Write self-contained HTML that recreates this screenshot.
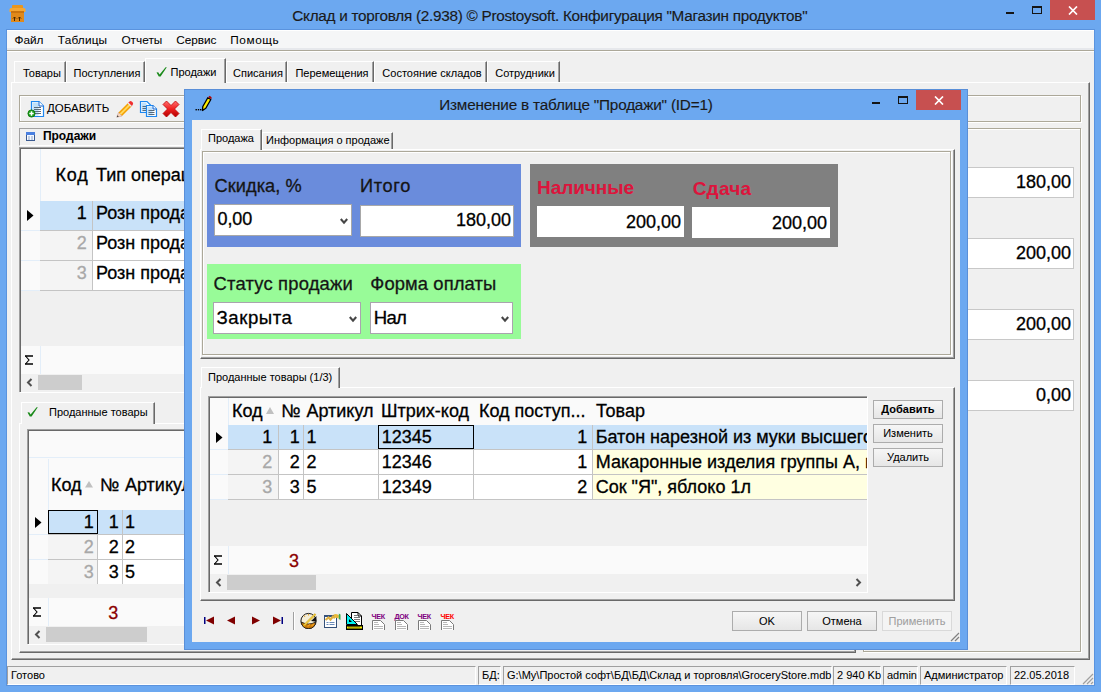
<!DOCTYPE html>
<html><head><meta charset="utf-8"><style>
html,body{margin:0;padding:0;}
body{width:1101px;height:692px;position:relative;overflow:hidden;background:#6CA8F0;font-family:"Liberation Sans",sans-serif;}
body div, body svg{position:absolute;}
.t{white-space:nowrap;line-height:1;-webkit-text-stroke:0.05px currentColor;}
.b{-webkit-text-stroke:0.3px currentColor;}
</style></head><body>
<div class="t" id="tw1" style="left:292.3px;top:7.55px;font-size:15.3px;font-weight:400;color:#1A1A1A;-webkit-text-stroke:0.15px currentColor;letter-spacing:-0.268px;">Склад и торговля (2.938) © Prostoysoft. Конфигурация "Магазин продуктов"</div>
<svg style="left:9px;top:4px" width="17" height="18" viewBox="0 0 17 18"><rect x="3" y="1" width="11" height="6" rx="1" fill="#E8961E"/>
<path d="M0.5 5.5 Q0.5 4 2 4 H15 Q16.5 4 16.5 5.5 V8 H0.5z" fill="#F5A733"/>
<rect x="2" y="7" width="13" height="11" fill="#E0891A"/>
<rect x="2" y="7" width="13" height="2" fill="#C9730F"/>
<path d="M5.5 17v-4M4 14.5l1.5-1.5 1.5 1.5M10.5 17v-4M9 14.5l1.5-1.5 1.5 1.5" stroke="#4A2800" stroke-width="1" fill="none"/></svg>
<div style="left:1006px;top:12px;width:8px;height:2px;background:#151515"></div>
<div style="left:1032px;top:6px;width:10px;height:8px;border:1px solid #151515;border-top-width:2px;box-sizing:border-box"></div>
<div style="left:1050px;top:0px;width:45px;height:20px;background:#C75050"></div>
<svg style="left:1068px;top:6px" width="10" height="9" viewBox="0 0 10 9"><path d="M1 0.5 L9 8.5 M9 0.5 L1 8.5" stroke="#fff" stroke-width="1.7"/></svg>
<div style="left:6px;top:29px;width:1089px;height:657px;background:#5A93DE"></div>
<div style="left:7px;top:30px;width:1087px;height:655px;background:#F0F0F0"></div>
<div style="left:7px;top:30px;width:1087px;height:18px;background:#F5F6F7"></div>
<div style="left:7px;top:30px;width:1087px;height:1px;background:#fff"></div>
<div style="left:7px;top:48px;width:1087px;height:2px;background:#E6E8EC"></div>
<div style="left:7px;top:50px;width:1087px;height:1px;background:#ACA899"></div>
<div style="left:7px;top:51px;width:1087px;height:1px;background:#fff"></div>
<div class="t" id="tw2" style="left:14.5px;top:34.81px;font-size:11.8px;font-weight:400;color:#000;letter-spacing:-0.004px;">Файл</div>
<div class="t" id="tw3" style="left:57.8px;top:34.81px;font-size:11.8px;font-weight:400;color:#000;letter-spacing:0.189px;">Таблицы</div>
<div class="t" id="tw4" style="left:121.4px;top:34.81px;font-size:11.8px;font-weight:400;color:#000;letter-spacing:0.035px;">Отчеты</div>
<div class="t" id="tw5" style="left:176.3px;top:34.81px;font-size:11.8px;font-weight:400;color:#000;letter-spacing:-0.066px;">Сервис</div>
<div class="t" id="tw6" style="left:230.3px;top:34.81px;font-size:11.8px;font-weight:400;color:#000;letter-spacing:0.572px;">Помощь</div>
<div style="left:14px;top:61px;width:52px;height:22px;border-left:1px solid #fff;border-top:1px solid #fff;border-right:1px solid #696969;box-sizing:border-box;background:#F0F0F0;box-shadow:inset -1px 0 0 #A0A0A0"></div>
<div class="t" style="left:23px;top:67.69px;font-size:11px;font-weight:400;color:#000;">Товары</div>
<div style="left:66px;top:61px;width:79px;height:22px;border-left:1px solid #fff;border-top:1px solid #fff;border-right:1px solid #696969;box-sizing:border-box;background:#F0F0F0;box-shadow:inset -1px 0 0 #A0A0A0"></div>
<div class="t" style="left:67.5px;width:79px;text-align:center;top:67.69px;font-size:11px;font-weight:400;color:#000;">Поступления</div>
<div style="left:226px;top:61px;width:61px;height:22px;border-left:1px solid #fff;border-top:1px solid #fff;border-right:1px solid #696969;box-sizing:border-box;background:#F0F0F0;box-shadow:inset -1px 0 0 #A0A0A0"></div>
<div class="t" style="left:227.5px;width:61px;text-align:center;top:67.69px;font-size:11px;font-weight:400;color:#000;">Списания</div>
<div style="left:287px;top:61px;width:87px;height:22px;border-left:1px solid #fff;border-top:1px solid #fff;border-right:1px solid #696969;box-sizing:border-box;background:#F0F0F0;box-shadow:inset -1px 0 0 #A0A0A0"></div>
<div class="t" style="left:288.5px;width:87px;text-align:center;top:67.69px;font-size:11px;font-weight:400;color:#000;">Перемещения</div>
<div style="left:374px;top:61px;width:113px;height:22px;border-left:1px solid #fff;border-top:1px solid #fff;border-right:1px solid #696969;box-sizing:border-box;background:#F0F0F0;box-shadow:inset -1px 0 0 #A0A0A0"></div>
<div class="t" style="left:375.5px;width:113px;text-align:center;top:67.69px;font-size:11px;font-weight:400;color:#000;">Состояние складов</div>
<div style="left:487px;top:61px;width:73px;height:22px;border-left:1px solid #fff;border-top:1px solid #fff;border-right:1px solid #696969;box-sizing:border-box;background:#F0F0F0;box-shadow:inset -1px 0 0 #A0A0A0"></div>
<div class="t" style="left:488.5px;width:73px;text-align:center;top:67.69px;font-size:11px;font-weight:400;color:#000;">Сотрудники</div>
<div style="left:11px;top:82px;width:1079px;height:578px;border-left:1px solid #fff;border-top:1px solid #fff;border-right:1px solid #696969;border-bottom:1px solid #696969;box-sizing:border-box;box-shadow:inset -1px -1px 0 #A0A0A0"></div>
<div style="left:145px;top:58px;width:81px;height:25px;border-left:1px solid #fff;border-top:1px solid #fff;border-right:1px solid #696969;box-sizing:border-box;background:#F0F0F0;box-shadow:inset -1px 0 0 #A0A0A0"></div>
<div class="t" style="left:170.5px;top:67.29px;font-size:11px;font-weight:400;color:#000;">Продажи</div>
<svg style="left:156px;top:67px" width="11" height="10" viewBox="0 0 11 10"><path d="M0.5 5.5 L2.8 9.5 L4.6 9.5 L10.8 0.3 L9.6 0.3 L3.6 7.6 L2.2 5.2z" fill="#1A8A1A"/></svg>
<div style="left:19px;top:95px;width:1062px;height:27px;border:1px solid #ACA899;box-sizing:border-box;box-shadow:inset 1px 1px 0 #fff, 1px 1px 0 #fff"></div>
<div class="t" style="left:47px;top:103.47px;font-size:11.5px;font-weight:400;color:#000;">ДОБАВИТЬ</div>
<svg style="left:27px;top:100px" width="18" height="18" viewBox="0 0 18 18"><path d="M4.5 1.5 H12 L16.5 6 V16.5 H4.5z" fill="#fff" stroke="#1E88F0" stroke-width="1.2"/>
<rect x="5.5" y="2.5" width="6" height="13" fill="#BFE0FA"/>
<path d="M12 1.5 V6 H16.5" fill="#fff" stroke="#1060D0" stroke-width="1"/>
<path d="M7 7.5h7M7 9.5h7M7 11.5h7M7 13.5h7" stroke="#5A6A78" stroke-width="1"/>
<circle cx="4.5" cy="13.5" r="3.6" fill="#18A018" stroke="#0A700A" stroke-width="0.8"/>
<path d="M4.5 11.3v4.4M2.3 13.5h4.4" stroke="#fff" stroke-width="1.5"/></svg>
<svg style="left:116px;top:100px" width="18" height="18" viewBox="0 0 18 18"><path d="M2.5 12.5 L12 3 L15.5 6.5 L6 16z" fill="#F5A000"/>
<path d="M3.6 13.6 L13.1 4.1 L14.4 5.4 L4.9 14.9z" fill="#FFD860"/>
<path d="M12 3 L13.5 1.5 Q14.8 0.5 16 1.7 L16.8 2.5 Q17.6 3.7 16.6 5 L15.5 6.5z" fill="#F03030"/>
<path d="M12 3 L15.5 6.5" stroke="#E8E8E8" stroke-width="1.2"/>
<path d="M2.5 12.5 L0.8 17.2 L6 16z" fill="#F8D8C0" stroke="#C09080" stroke-width="0.5"/>
<path d="M0.8 17.2 L1.5 15.2 L2.8 16.5z" fill="#333"/></svg>
<svg style="left:139px;top:100px" width="19" height="18" viewBox="0 0 19 18"><path d="M1.5 1.5 H8 L11.5 5 V12.5 H1.5z" fill="#fff" stroke="#1E88F0" stroke-width="1.2"/>
<rect x="2.5" y="2.5" width="5" height="9" fill="#BFE0FA"/>
<path d="M3.5 6.5h5M3.5 8.5h5M3.5 10.5h5" stroke="#5A6A78" stroke-width="1"/>
<path d="M7.5 5.5 H14 L17.5 9 V16.5 H7.5z" fill="#fff" stroke="#1E88F0" stroke-width="1.2"/>
<rect x="8.5" y="6.5" width="5" height="9" fill="#BFE0FA"/>
<path d="M14 5.5 V9 H17.5" fill="#fff" stroke="#1060D0" stroke-width="1"/>
<path d="M9.5 10.5h6M9.5 12.5h6M9.5 14.5h6" stroke="#5A6A78" stroke-width="1"/></svg>
<svg style="left:162px;top:100px" width="18" height="18" viewBox="0 0 18 18"><defs><linearGradient id="xr" x1="0" y1="0" x2="0" y2="1"><stop offset="0" stop-color="#FF7070"/><stop offset="0.5" stop-color="#F02020"/><stop offset="1" stop-color="#B00000"/></linearGradient></defs>
<path d="M1 4.5 L4.5 1 L9 5.5 L13.5 1 L17 4.5 L12.5 9 L17 13.5 L13.5 17 L9 12.5 L4.5 17 L1 13.5 L5.5 9z" fill="url(#xr)" stroke="#C00000" stroke-width="0.8" stroke-linejoin="round"/></svg>
<div style="left:863px;top:128px;width:218px;height:524px;border:1px solid #ACA899;box-sizing:border-box;box-shadow:inset 1px 1px 0 #fff, 1px 1px 0 #fff"></div>
<div style="left:960px;top:167px;width:114px;height:31px;background:#fff;border:1px solid #C8C8C8;box-sizing:border-box"></div>
<div class="t b" style="right:30px;top:173.36px;font-size:18px;font-weight:400;color:#000;">180,00</div>
<div style="left:960px;top:238px;width:114px;height:31px;background:#fff;border:1px solid #C8C8C8;box-sizing:border-box"></div>
<div class="t b" style="right:30px;top:244.36px;font-size:18px;font-weight:400;color:#000;">200,00</div>
<div style="left:960px;top:309px;width:114px;height:31px;background:#fff;border:1px solid #C8C8C8;box-sizing:border-box"></div>
<div class="t b" style="right:30px;top:315.36px;font-size:18px;font-weight:400;color:#000;">200,00</div>
<div style="left:960px;top:380px;width:114px;height:31px;background:#fff;border:1px solid #C8C8C8;box-sizing:border-box"></div>
<div class="t b" style="right:30px;top:386.36px;font-size:18px;font-weight:400;color:#000;">0,00</div>
<div style="left:19px;top:128px;width:300px;height:18px;border-top:1px solid #A0A0A0;border-left:1px solid #A0A0A0;border-bottom:1px solid #fff;box-sizing:border-box"></div>
<div class="t" style="left:42.9px;top:129.64px;font-size:12px;font-weight:700;color:#000;">Продажи</div>
<svg style="left:26px;top:132px" width="9" height="9" viewBox="0 0 9 9"><rect x="0.5" y="0.5" width="8" height="8" fill="#F4F8FF" stroke="#3A5A90" stroke-width="1"/>
<rect x="0" y="0" width="9" height="3" fill="#4A80E0"/>
<path d="M2 5h2M5 5h2M2 7h2M5 7h2" stroke="#8EA4C8" stroke-width="1"/></svg>
<div style="left:19px;top:147px;width:300px;height:245px;border-left:1px solid #A0A0A0;border-top:1px solid #A0A0A0;box-sizing:border-box;background:#F0F0F0;box-shadow:1px 1px 0 #fff"></div>
<div style="left:20px;top:148px;width:299px;height:244px;border-left:1px solid #696969;border-top:1px solid #696969;box-sizing:border-box"></div>
<div style="left:21px;top:149px;width:298px;height:52px;background:#FAFAFA"></div>
<div style="left:40px;top:149px;width:1px;height:52px;background:#E3EEF9"></div>
<div class="t b" id="tw7" style="left:55.5px;top:165.96px;font-size:18px;font-weight:400;color:#000;letter-spacing:0.796px;">Код</div>
<div class="t b" style="left:96px;top:165.96px;font-size:18px;font-weight:400;color:#000;">Тип операц</div>
<div style="left:21px;top:201px;width:19px;height:90px;background:#FAFAFA"></div>
<div style="left:40px;top:201px;width:1px;height:90px;background:#E3EEF9"></div>
<div style="left:21px;top:230px;width:19px;height:1px;background:#E3EEF9"></div>
<div style="left:40px;top:201px;width:52px;height:30px;background:#C9E2F9;border-bottom:1px solid #C4C4C4;box-sizing:border-box"></div>
<div style="left:92px;top:201px;width:227px;height:30px;background:#C9E2F9;border-left:1px solid #C4C4C4;border-bottom:1px solid #C4C4C4;box-sizing:border-box"></div>
<div class="t b" style="right:1014.2px;top:204.06px;font-size:18px;font-weight:400;color:#000;">1</div>
<div class="t b" style="left:96px;top:204.06px;font-size:18px;font-weight:400;color:#000;">Розн прода</div>
<svg style="left:27px;top:210px" width="7" height="11" viewBox="0 0 7 11"><path d="M0 0 L6.5 5.5 L0 11z" fill="#000"/></svg>
<div style="left:21px;top:260px;width:19px;height:1px;background:#E3EEF9"></div>
<div style="left:40px;top:231px;width:52px;height:30px;background:#F4F4F4;border-bottom:1px solid #C4C4C4;box-sizing:border-box"></div>
<div style="left:92px;top:231px;width:227px;height:30px;background:#fff;border-left:1px solid #C4C4C4;border-bottom:1px solid #C4C4C4;box-sizing:border-box"></div>
<div class="t b" style="right:1014.2px;top:234.06px;font-size:18px;font-weight:400;color:#A8A8A8;">2</div>
<div class="t b" style="left:96px;top:234.06px;font-size:18px;font-weight:400;color:#000;">Розн прода</div>
<div style="left:21px;top:290px;width:19px;height:1px;background:#E3EEF9"></div>
<div style="left:40px;top:261px;width:52px;height:30px;background:#F4F4F4;border-bottom:1px solid #C4C4C4;box-sizing:border-box"></div>
<div style="left:92px;top:261px;width:227px;height:30px;background:#fff;border-left:1px solid #C4C4C4;border-bottom:1px solid #C4C4C4;box-sizing:border-box"></div>
<div class="t b" style="right:1014.2px;top:264.06px;font-size:18px;font-weight:400;color:#A8A8A8;">3</div>
<div class="t b" style="left:96px;top:264.06px;font-size:18px;font-weight:400;color:#000;">Розн прода</div>
<div style="left:21px;top:346px;width:298px;height:28px;background:#FAFAFA"></div>
<div style="left:40px;top:346px;width:1px;height:28px;background:#E3EEF9"></div>
<svg style="left:24px;top:355px" width="10" height="10" viewBox="0 0 10 10"><path d="M1.5 1 L5 5 L1.5 9" stroke="#000" stroke-width="1.1" fill="none"/><path d="M1 1 H9 M1 9 H9" stroke="#000" stroke-width="1.4"/></svg>
<div style="left:21px;top:374px;width:298px;height:16px;background:#F0F0F0"></div>
<div style="left:38px;top:375px;width:44px;height:15px;background:#CDCDCD"></div>
<svg style="left:26px;top:378px" width="7" height="9" viewBox="0 0 7 9"><path d="M5.5 1 L2 4.5 L5.5 8" stroke="#505050" stroke-width="2" fill="none"/></svg>
<div style="left:19px;top:423px;width:837px;height:230px;border-left:1px solid #fff;border-top:1px solid #fff;border-right:1px solid #696969;border-bottom:1px solid #696969;box-sizing:border-box;box-shadow:inset -1px -1px 0 #A0A0A0"></div>
<div style="left:21px;top:402px;width:134px;height:22px;border-left:1px solid #fff;border-top:1px solid #fff;border-right:1px solid #696969;box-sizing:border-box;background:#F0F0F0;box-shadow:inset -1px 0 0 #A0A0A0"></div>
<div class="t" style="left:49px;top:406.69px;font-size:11px;font-weight:400;color:#000;">Проданные товары</div>
<svg style="left:27px;top:407px" width="11" height="10" viewBox="0 0 11 10"><path d="M0.5 5.5 L2.8 9.5 L4.6 9.5 L10.8 0.3 L9.6 0.3 L3.6 7.6 L2.2 5.2z" fill="#1A8A1A"/></svg>
<div style="left:27px;top:429px;width:300px;height:215px;border-left:1px solid #A0A0A0;border-top:1px solid #A0A0A0;box-sizing:border-box;background:#F0F0F0;box-shadow:1px 1px 0 #fff"></div>
<div style="left:28px;top:430px;width:299px;height:214px;border-left:1px solid #696969;border-top:1px solid #696969;box-sizing:border-box"></div>
<div style="left:29px;top:431px;width:298px;height:79px;background:#FAFAFA"></div>
<div style="left:48px;top:459px;width:1px;height:51px;background:#E3EEF9"></div>
<div class="t b" style="left:51px;top:475.76px;font-size:18px;font-weight:400;color:#000;">Код</div>
<div class="t b" style="left:100px;top:475.76px;font-size:18px;font-weight:400;color:#000;">№</div>
<div class="t b" style="left:125px;top:475.76px;font-size:18px;font-weight:400;color:#000;">Артикул</div>
<div style="left:29px;top:510px;width:19px;height:75px;background:#FAFAFA"></div>
<div style="left:48px;top:510px;width:1px;height:75px;background:#E3EEF9"></div>
<div style="left:29px;top:534px;width:19px;height:1px;background:#E3EEF9"></div>
<div style="left:48px;top:510px;width:49px;height:25px;background:#C9E2F9;border-bottom:1px solid #C4C4C4;box-sizing:border-box"></div>
<div style="left:97px;top:510px;width:25px;height:25px;background:#C9E2F9;border-left:1px solid #C4C4C4;border-bottom:1px solid #C4C4C4;box-sizing:border-box"></div>
<div style="left:122px;top:510px;width:205px;height:25px;background:#C9E2F9;border-left:1px solid #C4C4C4;border-bottom:1px solid #C4C4C4;box-sizing:border-box"></div>
<div class="t b" style="right:1007.2px;top:513.26px;font-size:18px;font-weight:400;color:#000;">1</div>
<div class="t b" style="right:982.2px;top:513.26px;font-size:18px;font-weight:400;color:#000;">1</div>
<div class="t b" style="left:125px;top:513.26px;font-size:18px;font-weight:400;color:#000;">1</div>
<svg style="left:35px;top:517px" width="7" height="11" viewBox="0 0 7 11"><path d="M0 0 L6.5 5.5 L0 11z" fill="#000"/></svg>
<div style="left:29px;top:559px;width:19px;height:1px;background:#E3EEF9"></div>
<div style="left:48px;top:535px;width:49px;height:25px;background:#F4F4F4;border-bottom:1px solid #C4C4C4;box-sizing:border-box"></div>
<div style="left:97px;top:535px;width:25px;height:25px;background:#fff;border-left:1px solid #C4C4C4;border-bottom:1px solid #C4C4C4;box-sizing:border-box"></div>
<div style="left:122px;top:535px;width:205px;height:25px;background:#fff;border-left:1px solid #C4C4C4;border-bottom:1px solid #C4C4C4;box-sizing:border-box"></div>
<div class="t b" style="right:1007.2px;top:538.26px;font-size:18px;font-weight:400;color:#A8A8A8;">2</div>
<div class="t b" style="right:982.2px;top:538.26px;font-size:18px;font-weight:400;color:#000;">2</div>
<div class="t b" style="left:125px;top:538.26px;font-size:18px;font-weight:400;color:#000;">2</div>
<div style="left:29px;top:584px;width:19px;height:1px;background:#E3EEF9"></div>
<div style="left:48px;top:560px;width:49px;height:25px;background:#F4F4F4;border-bottom:1px solid #C4C4C4;box-sizing:border-box"></div>
<div style="left:97px;top:560px;width:25px;height:25px;background:#fff;border-left:1px solid #C4C4C4;border-bottom:1px solid #C4C4C4;box-sizing:border-box"></div>
<div style="left:122px;top:560px;width:205px;height:25px;background:#fff;border-left:1px solid #C4C4C4;border-bottom:1px solid #C4C4C4;box-sizing:border-box"></div>
<div class="t b" style="right:1007.2px;top:563.26px;font-size:18px;font-weight:400;color:#A8A8A8;">3</div>
<div class="t b" style="right:982.2px;top:563.26px;font-size:18px;font-weight:400;color:#000;">3</div>
<div class="t b" style="left:125px;top:563.26px;font-size:18px;font-weight:400;color:#000;">5</div>
<div style="left:48px;top:510px;width:50px;height:24px;border:1px solid #000;box-sizing:border-box"></div>
<div style="left:29px;top:598px;width:298px;height:28px;background:#FAFAFA"></div>
<div style="left:48px;top:598px;width:1px;height:28px;background:#E3EEF9"></div>
<svg style="left:32px;top:607px" width="10" height="10" viewBox="0 0 10 10"><path d="M1.5 1 L5 5 L1.5 9" stroke="#000" stroke-width="1.1" fill="none"/><path d="M1 1 H9 M1 9 H9" stroke="#000" stroke-width="1.4"/></svg>
<div style="left:29px;top:626px;width:298px;height:16px;background:#F0F0F0"></div>
<div style="left:46px;top:627px;width:101px;height:15px;background:#CDCDCD"></div>
<svg style="left:34px;top:630px" width="7" height="9" viewBox="0 0 7 9"><path d="M5.5 1 L2 4.5 L5.5 8" stroke="#505050" stroke-width="2" fill="none"/></svg>
<div style="left:29px;top:457px;width:298px;height:1px;background:#E3EEF9"></div>
<div style="left:29px;top:584px;width:298px;height:14px;background:#F0F0F0"></div>
<div class="t b" style="left:108.3px;top:603.76px;font-size:18px;font-weight:400;color:#8B0000;">3</div>
<svg style="left:85px;top:480.5px" width="8" height="7" viewBox="0 0 8 7"><path d="M0 6.5 L4 0 L8 6.5z" fill="#C0C0C0"/></svg>
<div style="left:7px;top:666px;width:469px;height:19px;border-top:1px solid #A0A0A0;border-left:1px solid #A0A0A0;border-right:1px solid #fff;border-bottom:1px solid #fff;box-sizing:border-box"></div>
<div class="t" style="left:11px;top:669.69px;font-size:11px;font-weight:400;color:#000;">Готово</div>
<div style="left:478px;top:666px;width:23px;height:19px;border-top:1px solid #A0A0A0;border-left:1px solid #A0A0A0;border-right:1px solid #fff;border-bottom:1px solid #fff;box-sizing:border-box"></div>
<div class="t" style="left:482px;top:669.69px;font-size:11px;font-weight:400;color:#000;">БД:</div>
<div style="left:503px;top:666px;width:329px;height:19px;border-top:1px solid #A0A0A0;border-left:1px solid #A0A0A0;border-right:1px solid #fff;border-bottom:1px solid #fff;box-sizing:border-box"></div>
<div class="t" style="left:507px;top:669.69px;font-size:11px;font-weight:400;color:#000;">G:\My\Простой софт\БД\БД\Склад и торговля\GroceryStore.mdb</div>
<div style="left:833px;top:666px;width:48px;height:19px;border-top:1px solid #A0A0A0;border-left:1px solid #A0A0A0;border-right:1px solid #fff;border-bottom:1px solid #fff;box-sizing:border-box"></div>
<div class="t" style="left:837px;top:669.69px;font-size:11px;font-weight:400;color:#000;">2 940 Kb</div>
<div style="left:883px;top:666px;width:35px;height:19px;border-top:1px solid #A0A0A0;border-left:1px solid #A0A0A0;border-right:1px solid #fff;border-bottom:1px solid #fff;box-sizing:border-box"></div>
<div class="t" style="left:887px;top:669.69px;font-size:11px;font-weight:400;color:#000;">admin</div>
<div style="left:920px;top:666px;width:87px;height:19px;border-top:1px solid #A0A0A0;border-left:1px solid #A0A0A0;border-right:1px solid #fff;border-bottom:1px solid #fff;box-sizing:border-box"></div>
<div class="t" style="left:924px;top:669.69px;font-size:11px;font-weight:400;color:#000;">Администратор</div>
<div style="left:1010px;top:666px;width:65px;height:19px;border-top:1px solid #A0A0A0;border-left:1px solid #A0A0A0;border-right:1px solid #fff;border-bottom:1px solid #fff;box-sizing:border-box"></div>
<div class="t" style="left:1014px;top:669.69px;font-size:11px;font-weight:400;color:#000;">22.05.2018</div>
<svg style="left:1082px;top:673px" width="12" height="12" viewBox="0 0 12 12"><path d="M11 1 L1 11 M11 5 L5 11 M11 9 L9 11" stroke="#A0A0A0" stroke-width="1.2"/></svg>
<div style="left:184px;top:89px;width:784px;height:561px;background:#6CA8F0;border:1px solid #5A8FD8;box-sizing:border-box"></div>
<div class="t" id="tw8" style="left:439.2px;top:96.55px;font-size:15.3px;font-weight:400;color:#1A1A1A;-webkit-text-stroke:0.15px currentColor;letter-spacing:-0.188px;">Изменение в таблице "Продажи" (ID=1)</div>
<div style="left:872px;top:102px;width:8px;height:2px;background:#151515"></div>
<div style="left:898px;top:96px;width:10px;height:8px;border:1px solid #151515;border-top-width:2px;box-sizing:border-box"></div>
<div style="left:916px;top:90px;width:45px;height:20px;background:#C75050"></div>
<svg style="left:934px;top:96px" width="10" height="9" viewBox="0 0 10 9"><path d="M1 0.5 L9 8.5 M9 0.5 L1 8.5" stroke="#fff" stroke-width="1.7"/></svg>
<svg style="left:194px;top:95px" width="18" height="18" viewBox="0 0 18 18"><path d="M8.5 15.5 L8.8 11.5 L13.8 2.8 L16.8 4.5 L11.8 13.2z" fill="#FFF000" stroke="#000" stroke-width="1.3" stroke-linejoin="round"/>
<path d="M14.2 2.3 L17.2 4 L17.8 3 Q17.5 1.5 15.5 0.8z" fill="#B00000"/>
<rect x="1.5" y="14" width="1.4" height="1.4" fill="#000"/><rect x="3.8" y="14" width="1.4" height="1.4" fill="#000"/><rect x="6" y="14" width="1.4" height="1.4" fill="#000"/></svg>
<div style="left:192px;top:120px;width:768px;height:522px;background:#F0F0F0"></div>
<div style="left:262px;top:132px;width:131px;height:18px;border-left:1px solid #fff;border-top:1px solid #fff;border-right:1px solid #696969;box-sizing:border-box;background:#F0F0F0;box-shadow:inset -1px 0 0 #A0A0A0"></div>
<div class="t" style="left:266px;top:134.69px;font-size:11px;font-weight:400;color:#000;">Информация о продаже</div>
<div style="left:200px;top:149px;width:755px;height:210px;border-left:1px solid #fff;border-top:1px solid #fff;border-right:1px solid #696969;border-bottom:1px solid #696969;box-sizing:border-box;box-shadow:inset -1px -1px 0 #A0A0A0"></div>
<div style="left:201px;top:129px;width:61px;height:21px;border-left:1px solid #fff;border-top:1px solid #fff;border-right:1px solid #696969;box-sizing:border-box;background:#F0F0F0;box-shadow:inset -1px 0 0 #A0A0A0"></div>
<div class="t" style="left:208px;top:133.19px;font-size:11px;font-weight:400;color:#000;">Продажа</div>
<div style="left:202px;top:151px;width:749px;height:204px;border:1px solid #ACA899;box-sizing:border-box;box-shadow:inset 1px 1px 0 #fff, 1px 1px 0 #fff"></div>
<div style="left:207px;top:164px;width:314px;height:83px;background:#6A8CDC"></div>
<div class="t b" id="tw9" style="left:214.6px;top:176.99px;font-size:18.2px;font-weight:400;color:#151515;letter-spacing:0.043px;">Скидка, %</div>
<div class="t b" id="tw10" style="left:360px;top:176.99px;font-size:18.2px;font-weight:400;color:#151515;letter-spacing:0.667px;">Итого</div>
<div style="left:214px;top:204px;width:138px;height:32px;background:#fff;border:1px solid #A8A8A8;box-sizing:border-box"></div>
<div class="t b" id="tw11" style="left:217.6px;top:210.26px;font-size:18px;font-weight:400;color:#000;letter-spacing:-0.137px;">0,00</div>
<svg style="left:339.5px;top:217.5px" width="8" height="7" viewBox="0 0 8 7"><path d="M0.8 1 L4 4.6 L7.2 1" stroke="#464646" stroke-width="2.1" fill="none"/></svg>
<div style="left:360px;top:205px;width:154px;height:32px;background:#fff;border:1px solid #A8A8A8;box-sizing:border-box"></div>
<div class="t b" style="right:590px;top:210.76px;font-size:18px;font-weight:400;color:#000;">180,00</div>
<div style="left:530px;top:164px;width:308px;height:83px;background:#808080"></div>
<div class="t" id="tw12" style="left:537px;top:177.82px;font-size:19px;font-weight:700;color:#DC143C;letter-spacing:-0.043px;">Наличные</div>
<div class="t" id="tw13" style="left:692.7px;top:178.62px;font-size:19px;font-weight:700;color:#DC143C;letter-spacing:0.206px;">Сдача</div>
<div style="left:537px;top:206px;width:147px;height:31px;background:#fff"></div>
<div class="t b" style="right:420px;top:212.56px;font-size:18px;font-weight:400;color:#000;">200,00</div>
<div style="left:692px;top:207px;width:138px;height:31px;background:#fff"></div>
<div class="t b" style="right:274px;top:213.56px;font-size:18px;font-weight:400;color:#000;">200,00</div>
<div style="left:207px;top:264px;width:314px;height:75px;background:#98FB98"></div>
<div class="t b" id="tw14" style="left:213.5px;top:275.12px;font-size:18.4px;font-weight:400;color:#151515;letter-spacing:0.193px;">Статус продажи</div>
<div class="t b" id="tw15" style="left:370.3px;top:275.12px;font-size:18.4px;font-weight:400;color:#151515;letter-spacing:0.099px;">Форма оплаты</div>
<div style="left:213px;top:302px;width:148px;height:32px;background:#fff;border:1px solid #A9A4AE;box-sizing:border-box"></div>
<div class="t b" id="tw16" style="left:216.5px;top:308.56px;font-size:18.6px;font-weight:400;color:#000;letter-spacing:0.562px;">Закрыта</div>
<svg style="left:348.5px;top:315.5px" width="8" height="7" viewBox="0 0 8 7"><path d="M0.8 1 L4 4.6 L7.2 1" stroke="#464646" stroke-width="2.1" fill="none"/></svg>
<div style="left:370px;top:302px;width:143px;height:32px;background:#fff;border:1px solid #A9A4AE;box-sizing:border-box"></div>
<div class="t b" id="tw17" style="left:373.8px;top:308.56px;font-size:18.6px;font-weight:400;color:#000;letter-spacing:-0.811px;">Нал</div>
<svg style="left:500.5px;top:315.5px" width="8" height="7" viewBox="0 0 8 7"><path d="M0.8 1 L4 4.6 L7.2 1" stroke="#464646" stroke-width="2.1" fill="none"/></svg>
<div style="left:200px;top:387px;width:755px;height:214px;border-left:1px solid #fff;border-top:1px solid #fff;border-right:1px solid #696969;border-bottom:1px solid #696969;box-sizing:border-box;box-shadow:inset -1px -1px 0 #A0A0A0"></div>
<div style="left:201px;top:367px;width:139px;height:21px;border-left:1px solid #fff;border-top:1px solid #fff;border-right:1px solid #696969;box-sizing:border-box;background:#F0F0F0;box-shadow:inset -1px 0 0 #A0A0A0"></div>
<div class="t" style="left:208px;top:371.69px;font-size:11px;font-weight:400;color:#000;">Проданные товары (1/3)</div>
<div style="left:208px;top:396px;width:659px;height:196px;border-left:1px solid #A0A0A0;border-top:1px solid #A0A0A0;box-sizing:border-box;background:#F0F0F0;box-shadow:1px 1px 0 #fff"></div>
<div style="left:209px;top:397px;width:658px;height:195px;border-left:1px solid #696969;border-top:1px solid #696969;box-sizing:border-box"></div>
<div style="left:210px;top:398px;width:657px;height:27px;background:#FAFAFA"></div>
<div style="left:228px;top:398px;width:1px;height:27px;background:#E3EEF9"></div>
<div class="t b" style="left:232px;top:402.36px;font-size:18px;font-weight:400;color:#000;">Код</div>
<div class="t b" style="left:281.3px;top:402.36px;font-size:18px;font-weight:400;color:#000;">№</div>
<div class="t b" style="left:306.4px;top:402.36px;font-size:18px;font-weight:400;color:#000;">Артикул</div>
<div class="t b" style="left:381px;top:402.36px;font-size:18px;font-weight:400;color:#000;">Штрих-код</div>
<div class="t b" style="left:479px;top:402.36px;font-size:18px;font-weight:400;color:#000;">Код поступ...</div>
<div class="t b" style="left:596px;top:402.36px;font-size:18px;font-weight:400;color:#000;">Товар</div>
<div style="left:210px;top:425px;width:18px;height:75px;background:#FAFAFA"></div>
<div style="left:228px;top:425px;width:1px;height:75px;background:#E3EEF9"></div>
<div style="left:210px;top:449px;width:18px;height:1px;background:#E3EEF9"></div>
<div style="left:228px;top:425px;width:50px;height:25px;background:#C9E2F9;border-bottom:1px solid #C4C4C4;box-sizing:border-box"></div>
<div style="left:278px;top:425px;width:25px;height:25px;background:#C9E2F9;border-left:1px solid #C4C4C4;border-bottom:1px solid #C4C4C4;box-sizing:border-box"></div>
<div style="left:303px;top:425px;width:75px;height:25px;background:#C9E2F9;border-left:1px solid #C4C4C4;border-bottom:1px solid #C4C4C4;box-sizing:border-box"></div>
<div style="left:378px;top:425px;width:95px;height:25px;background:#C9E2F9;border-left:1px solid #C4C4C4;border-bottom:1px solid #C4C4C4;box-sizing:border-box"></div>
<div style="left:473px;top:425px;width:119px;height:25px;background:#C9E2F9;border-left:1px solid #C4C4C4;border-bottom:1px solid #C4C4C4;box-sizing:border-box"></div>
<div style="left:592px;top:425px;width:275px;height:25px;background:#C9E2F9;border-left:1px solid #C4C4C4;border-bottom:1px solid #C4C4C4;box-sizing:border-box"></div>
<div class="t b" style="right:828.7px;top:428.26px;font-size:18px;font-weight:400;color:#000;">1</div>
<div class="t b" style="right:801.2px;top:428.26px;font-size:18px;font-weight:400;color:#000;">1</div>
<div class="t b" style="left:306.5px;top:428.26px;font-size:18px;font-weight:400;color:#000;">1</div>
<div class="t b" style="left:381.7px;top:428.26px;font-size:18px;font-weight:400;color:#000;">12345</div>
<div class="t b" style="right:513.7px;top:428.26px;font-size:18px;font-weight:400;color:#000;">1</div>
<div style="left:595.7px;top:425px;width:271.29999999999995px;height:25px;overflow:hidden"><div class="t b" style="left:0;top:3.26px;font-size:18px">Батон нарезной из муки высшего сорта</div></div>
<svg style="left:216px;top:432px" width="7" height="11" viewBox="0 0 7 11"><path d="M0 0 L6.5 5.5 L0 11z" fill="#000"/></svg>
<div style="left:210px;top:474px;width:18px;height:1px;background:#E3EEF9"></div>
<div style="left:228px;top:450px;width:50px;height:25px;background:#F4F4F4;border-bottom:1px solid #C4C4C4;box-sizing:border-box"></div>
<div style="left:278px;top:450px;width:25px;height:25px;background:#fff;border-left:1px solid #C4C4C4;border-bottom:1px solid #C4C4C4;box-sizing:border-box"></div>
<div style="left:303px;top:450px;width:75px;height:25px;background:#fff;border-left:1px solid #C4C4C4;border-bottom:1px solid #C4C4C4;box-sizing:border-box"></div>
<div style="left:378px;top:450px;width:95px;height:25px;background:#fff;border-left:1px solid #C4C4C4;border-bottom:1px solid #C4C4C4;box-sizing:border-box"></div>
<div style="left:473px;top:450px;width:119px;height:25px;background:#fff;border-left:1px solid #C4C4C4;border-bottom:1px solid #C4C4C4;box-sizing:border-box"></div>
<div style="left:592px;top:450px;width:275px;height:25px;background:#FFFFE1;border-left:1px solid #C4C4C4;border-bottom:1px solid #C4C4C4;box-sizing:border-box"></div>
<div class="t b" style="right:828.7px;top:453.26px;font-size:18px;font-weight:400;color:#A8A8A8;">2</div>
<div class="t b" style="right:801.2px;top:453.26px;font-size:18px;font-weight:400;color:#000;">2</div>
<div class="t b" style="left:306.5px;top:453.26px;font-size:18px;font-weight:400;color:#000;">2</div>
<div class="t b" style="left:381.7px;top:453.26px;font-size:18px;font-weight:400;color:#000;">12346</div>
<div class="t b" style="right:513.7px;top:453.26px;font-size:18px;font-weight:400;color:#000;">1</div>
<div style="left:595.7px;top:450px;width:271.29999999999995px;height:25px;overflow:hidden"><div class="t b" style="left:0;top:3.26px;font-size:18px">Макаронные изделия группы А, высший сорт</div></div>
<div style="left:210px;top:499px;width:18px;height:1px;background:#E3EEF9"></div>
<div style="left:228px;top:475px;width:50px;height:25px;background:#F4F4F4;border-bottom:1px solid #C4C4C4;box-sizing:border-box"></div>
<div style="left:278px;top:475px;width:25px;height:25px;background:#fff;border-left:1px solid #C4C4C4;border-bottom:1px solid #C4C4C4;box-sizing:border-box"></div>
<div style="left:303px;top:475px;width:75px;height:25px;background:#fff;border-left:1px solid #C4C4C4;border-bottom:1px solid #C4C4C4;box-sizing:border-box"></div>
<div style="left:378px;top:475px;width:95px;height:25px;background:#fff;border-left:1px solid #C4C4C4;border-bottom:1px solid #C4C4C4;box-sizing:border-box"></div>
<div style="left:473px;top:475px;width:119px;height:25px;background:#fff;border-left:1px solid #C4C4C4;border-bottom:1px solid #C4C4C4;box-sizing:border-box"></div>
<div style="left:592px;top:475px;width:275px;height:25px;background:#FFFFE1;border-left:1px solid #C4C4C4;border-bottom:1px solid #C4C4C4;box-sizing:border-box"></div>
<div class="t b" style="right:828.7px;top:478.26px;font-size:18px;font-weight:400;color:#A8A8A8;">3</div>
<div class="t b" style="right:801.2px;top:478.26px;font-size:18px;font-weight:400;color:#000;">3</div>
<div class="t b" style="left:306.5px;top:478.26px;font-size:18px;font-weight:400;color:#000;">5</div>
<div class="t b" style="left:381.7px;top:478.26px;font-size:18px;font-weight:400;color:#000;">12349</div>
<div class="t b" style="right:513.7px;top:478.26px;font-size:18px;font-weight:400;color:#000;">2</div>
<div style="left:595.7px;top:475px;width:271.29999999999995px;height:25px;overflow:hidden"><div class="t b" style="left:0;top:3.26px;font-size:18px">Сок "Я", яблоко 1л</div></div>
<div style="left:378px;top:425px;width:96px;height:24px;border:1px solid #000;box-sizing:border-box"></div>
<div style="left:210px;top:546px;width:657px;height:28px;background:#FAFAFA"></div>
<div style="left:228px;top:546px;width:1px;height:28px;background:#E3EEF9"></div>
<svg style="left:213px;top:555px" width="10" height="10" viewBox="0 0 10 10"><path d="M1.5 1 L5 5 L1.5 9" stroke="#000" stroke-width="1.1" fill="none"/><path d="M1 1 H9 M1 9 H9" stroke="#000" stroke-width="1.4"/></svg>
<div style="left:210px;top:574px;width:657px;height:16px;background:#F0F0F0"></div>
<div style="left:227px;top:575px;width:89px;height:15px;background:#CDCDCD"></div>
<svg style="left:215px;top:578px" width="7" height="9" viewBox="0 0 7 9"><path d="M5.5 1 L2 4.5 L5.5 8" stroke="#505050" stroke-width="2" fill="none"/></svg>
<div style="left:210px;top:500px;width:657px;height:46px;background:#F0F0F0"></div>
<div class="t b" style="left:289px;top:551.76px;font-size:18px;font-weight:400;color:#8B0000;">3</div>
<svg style="left:266px;top:407px" width="8" height="7" viewBox="0 0 8 7"><path d="M0 7 L4 0 L8 7z" fill="#C0C0C0"/></svg>
<svg style="left:855px;top:578px" width="7" height="9" viewBox="0 0 7 9"><path d="M1.5 1 L5 4.5 L1.5 8" stroke="#505050" stroke-width="2" fill="none"/></svg>
<div style="left:873px;top:400px;width:70px;height:19px;background:linear-gradient(#F6F6F6,#E6E6E6);border:1px solid #ACACAC;box-sizing:border-box"></div>
<div class="t" style="left:873px;width:70px;text-align:center;top:404.49px;font-size:11px;font-weight:700;color:#000;">Добавить</div>
<div style="left:873px;top:424px;width:70px;height:19px;background:linear-gradient(#F6F6F6,#E6E6E6);border:1px solid #ACACAC;box-sizing:border-box"></div>
<div class="t" style="left:873px;width:70px;text-align:center;top:428.49px;font-size:11px;font-weight:400;color:#000;">Изменить</div>
<div style="left:873px;top:448px;width:70px;height:19px;background:linear-gradient(#F6F6F6,#E6E6E6);border:1px solid #ACACAC;box-sizing:border-box"></div>
<div class="t" style="left:873px;width:70px;text-align:center;top:452.49px;font-size:11px;font-weight:400;color:#000;">Удалить</div>
<div style="left:732px;top:611px;width:70px;height:20px;background:linear-gradient(#F6F6F6,#E6E6E6);border:1px solid #ACACAC;box-sizing:border-box"></div>
<div class="t" style="left:732px;width:70px;text-align:center;top:615.99px;font-size:11px;font-weight:400;color:#000;">OK</div>
<div style="left:807px;top:611px;width:70px;height:20px;background:linear-gradient(#F6F6F6,#E6E6E6);border:1px solid #ACACAC;box-sizing:border-box"></div>
<div class="t" style="left:807px;width:70px;text-align:center;top:615.99px;font-size:11px;font-weight:400;color:#000;">Отмена</div>
<div style="left:882px;top:611px;width:70px;height:20px;background:#F4F4F4;border:1px solid #D9D9D9;box-sizing:border-box"></div>
<div class="t" style="left:882px;width:70px;text-align:center;top:615.99px;font-size:11px;font-weight:400;color:#A0A0A0;">Применить</div>
<svg style="left:950px;top:632px" width="10" height="10" viewBox="0 0 10 10"><path d="M9 1 L1 9 M9 5 L5 9" stroke="#808080" stroke-width="1.2"/></svg>
<svg style="left:203px;top:616px" width="12" height="9" viewBox="0 0 12 9"><rect x="1" y="1" width="1.5" height="7" fill="#000080"/><path d="M3 4.5 L11 0.5 V8.5z" fill="#800000"/></svg>
<svg style="left:226px;top:616px" width="10" height="9" viewBox="0 0 10 9"><path d="M1 4.5 L9 0.5 V8.5z" fill="#800000"/></svg>
<svg style="left:251px;top:616px" width="10" height="9" viewBox="0 0 10 9"><path d="M9 4.5 L1 0.5 V8.5z" fill="#800000"/></svg>
<svg style="left:272px;top:616px" width="12" height="9" viewBox="0 0 12 9"><rect x="9.5" y="1" width="1.5" height="7" fill="#000080"/><path d="M9 4.5 L1 0.5 V8.5z" fill="#800000"/></svg>
<div style="left:293px;top:612px;width:1px;height:18px;background:#A0A0A0"></div>
<div style="left:294px;top:612px;width:1px;height:18px;background:#fff"></div>
<svg style="left:300px;top:612px" width="18" height="17" viewBox="0 0 18 17"><circle cx="8.5" cy="9" r="7.6" fill="#F4EED8" stroke="#1A1A1A" stroke-width="1"/>
<path d="M1.3 10 Q8.5 14 15.7 10 Q15 16.5 8.5 16.6 Q2 16.5 1.3 10z" fill="#C87808" stroke="#1A1A1A" stroke-width="0.8"/>
<path d="M3.5 13.5 L6 12.2 M7.5 14.5 L10 12.5 M11.5 14 L14 12" stroke="#F0A020" stroke-width="1.2"/>
<path d="M4 3.5 L5 5 M8.5 2 V3.5" stroke="#E0A030" stroke-width="1"/>
<path d="M3.5 14 L15.5 2" stroke="#D8A818" stroke-width="2"/>
<path d="M4.5 13 L15 2.5" stroke="#FFF080" stroke-width="0.8"/>
<path d="M11 9 L16.5 4 L16.2 9.8z" fill="#111"/></svg>
<svg style="left:323px;top:613px" width="18" height="16" viewBox="0 0 18 16"><rect x="1.5" y="2.5" width="12" height="12" fill="#fff" stroke="#34507A" stroke-width="1"/>
<rect x="1" y="2" width="13" height="2" fill="#34507A"/>
<path d="M3.5 9.5h2M6.5 9.5h5M3.5 11.5h2M6.5 11.5h5" stroke="#6A8AB8" stroke-width="1"/>
<path d="M2.5 7 L5.5 4.5 L7.5 6.5 L10 3.5 L12 5" stroke="#E0B040" stroke-width="2.2" fill="none"/>
<path d="M10.5 1.5 Q14 0 16 2.5 L15.5 5.5 Q13.5 4.5 11.5 4.8z" fill="#E8B838"/>
<path d="M15.8 0.5 L17.5 1.5 V7 L15.8 6z" fill="#3AA848"/></svg>
<svg style="left:346px;top:612px" width="17" height="18" viewBox="0 0 17 18"><path d="M5.5 0.5 H12 L15.5 4 V13.5 H5.5z" fill="#fff" stroke="#000" stroke-width="1"/>
<path d="M12 0.5 V4 H15.5" fill="none" stroke="#000" stroke-width="1"/>
<path d="M8 3.5h3M8 5.5h6M8 7.5h6M9 9.5h5" stroke="#777" stroke-width="1"/>
<path d="M0.5 1.5 L11.5 12.5 H0.5z" fill="#00F0F0" stroke="#000" stroke-width="1"/>
<path d="M3 7 L6 10 H3z" fill="#000"/>
<rect x="0" y="13" width="17" height="5" fill="#000"/>
<rect x="1" y="14.5" width="15" height="2" fill="#F8F000"/>
<path d="M3 14.5v1M5 14.5v1M7 14.5v1M9 14.5v1M11 14.5v1M13 14.5v1" stroke="#000" stroke-width="1"/></svg>
<div class="t" style="left:371.5px;top:612.6px;font-size:7.2px;font-weight:700;color:#800080;letter-spacing:-0.35px;line-height:8px">ЧЕК</div>
<svg style="left:372px;top:620px" width="14" height="10" viewBox="0 0 14 10"><path d="M0.5 10 V0.5 H8.5 L12.5 4.5 V10" fill="#fff" stroke="#7A7A7A" stroke-width="1"/>
<path d="M2 2.5h4M2 4.5h5M2 6.5h9M2 8.5h9" stroke="#B8B8B8" stroke-width="1"/></svg>
<div class="t" style="left:394.5px;top:612.6px;font-size:7.2px;font-weight:700;color:#800080;letter-spacing:-0.35px;line-height:8px">ДОК</div>
<svg style="left:395px;top:620px" width="14" height="10" viewBox="0 0 14 10"><path d="M0.5 10 V0.5 H8.5 L12.5 4.5 V10" fill="#fff" stroke="#7A7A7A" stroke-width="1"/>
<path d="M2 2.5h4M2 4.5h5M2 6.5h9M2 8.5h9" stroke="#B8B8B8" stroke-width="1"/></svg>
<div class="t" style="left:417.5px;top:612.6px;font-size:7.2px;font-weight:700;color:#800080;letter-spacing:-0.35px;line-height:8px">ЧЕК</div>
<svg style="left:418px;top:620px" width="14" height="10" viewBox="0 0 14 10"><path d="M0.5 10 V0.5 H8.5 L12.5 4.5 V10" fill="#fff" stroke="#7A7A7A" stroke-width="1"/>
<path d="M2 2.5h4M2 4.5h5M2 6.5h9M2 8.5h9" stroke="#B8B8B8" stroke-width="1"/></svg>
<div class="t" style="left:440.5px;top:612.6px;font-size:7.2px;font-weight:700;color:#FF0000;letter-spacing:-0.35px;line-height:8px">ЧЕК</div>
<svg style="left:441px;top:620px" width="14" height="10" viewBox="0 0 14 10"><path d="M0.5 10 V0.5 H8.5 L12.5 4.5 V10" fill="#fff" stroke="#7A7A7A" stroke-width="1"/>
<path d="M2 2.5h4M2 4.5h5M2 6.5h9M2 8.5h9" stroke="#B8B8B8" stroke-width="1"/></svg>
</body></html>
